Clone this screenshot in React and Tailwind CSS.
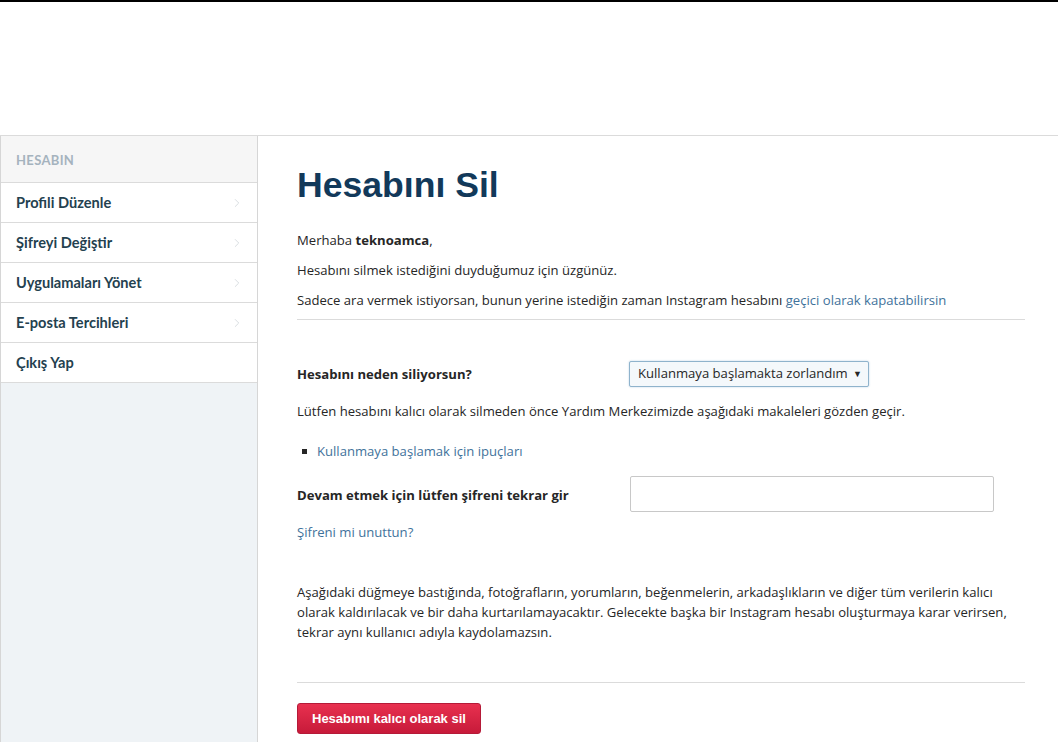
import { ChevronRight } from "lucide-react";

const menu = [
  { label: "Profili Düzenle", arrow: true },
  { label: "Şifreyi Değiştir", arrow: true },
  { label: "Uygulamaları Yönet", arrow: true },
  { label: "E-posta Tercihleri", arrow: true },
  { label: "Çıkış Yap", arrow: false },
];

function Sidebar() {
  return (
    <aside className="w-[258px] shrink-0 border-l border-r border-[#d6d6d6] bg-[#eff3f6] font-['Lato','Open_Sans',sans-serif]">
      <div className="h-[47px] flex items-center pt-[4px] px-[15px] bg-[#f6f6f6] border-b border-[#dbdbdb] text-[13px] font-bold tracking-wide text-[#a5b3be]">
        HESABIN
      </div>
      {menu.map((item) => (
        <div
          key={item.label}
          className="h-[40px] flex items-center justify-between pl-[15px] pr-[13px] bg-white border-b border-[#dbdbdb] text-[14.6px] font-bold text-[#24414f]"
        >
          <span>{item.label}</span>
          {item.arrow && <ChevronRight size={14} strokeWidth={1.5} className="text-[#d4d9dd]" />}
        </div>
      ))}
    </aside>
  );
}

export default function App() {
  return (
    <div className="min-h-[742px] bg-white border-t-2 border-black font-['Open_Sans','Noto_Sans',sans-serif] text-[13.1px] text-[#262626]">
      <div className="h-[133px]" />
      <div className="flex border-t border-[#dbdbdb] min-h-[607px]">
        <Sidebar />
        <main className="flex-1 pl-[39px] pr-[33px] pt-[26px] pb-[8px]">
          <h1 className="font-['Liberation_Sans',Arial,sans-serif] font-bold text-[35.6px] leading-[46px] text-[#12395a]">
            Hesabını Sil
          </h1>
          <div className="mt-[22px] flex flex-col gap-[10px] leading-[20px]">
            <p>
              Merhaba <span className="font-bold">teknoamca</span>,
            </p>
            <p>Hesabını silmek istediğini duyduğumuz için üzgünüz.</p>
            <p>
              Sadece ara vermek istiyorsan, bunun yerine istediğin zaman Instagram hesabını{" "}
              <a className="text-[#3f729b]">geçici olarak kapatabilirsin</a>
            </p>
          </div>
          <hr className="mt-[9px] border-[#dbdbdb]" />

          <div className="mt-[41px] flex items-center">
            <label className="w-[332px] font-bold pt-[2px]">Hesabını neden siliyorsun?</label>
            <div className="h-[26px] w-[240px] flex items-center justify-between pl-[8px] pr-[6px] border border-[#8fb3cc] rounded-[2px] bg-[#f4f8fb] shadow-[0_0_2px_rgba(80,140,190,0.4)]">
              <span>Kullanmaya başlamakta zorlandım</span>
              <span className="text-[9px]">▼</span>
            </div>
          </div>
          <p className="mt-[14px] leading-[20px]">
            Lütfen hesabını kalıcı olarak silmeden önce Yardım Merkezimizde aşağıdaki makaleleri gözden geçir.
          </p>
          <ul className="mt-[20px] pl-[5px] leading-[20px]">
            <li className="flex items-center gap-[10px]">
              <span className="w-[5px] h-[5px] bg-[#262626]" />
              <a className="text-[#3f729b]">Kullanmaya başlamak için ipuçları</a>
            </li>
          </ul>
          <div className="mt-[15px] flex items-center">
            <label className="w-[333px] font-bold pt-[4px]">Devam etmek için lütfen şifreni tekrar gir</label>
            <input
              type="password"
              className="h-[36px] w-[364px] border border-[#c8c8c8] rounded-[2px] bg-white outline-none px-2"
            />
          </div>
          <a className="block mt-[10px] leading-[20px] text-[#3f729b]">Şifreni mi unuttun?</a>

          <p className="mt-[40px] leading-[20px] max-w-[720px]">
            Aşağıdaki düğmeye bastığında, fotoğrafların, yorumların, beğenmelerin, arkadaşlıkların ve diğer tüm verilerin kalıcı olarak kaldırılacak ve bir daha kurtarılamayacaktır. Gelecekte başka bir Instagram hesabı oluşturmaya karar verirsen, tekrar aynı kullanıcı adıyla kaydolamazsın.
          </p>
          <hr className="mt-[40px] border-[#dbdbdb]" />
          <button className="mt-[20px] h-[31px] px-[14px] rounded-[3px] border border-[#b51a38] bg-gradient-to-b from-[#e8304f] to-[#c71a3a] text-white font-bold text-[13px] font-['Liberation_Sans',Arial,sans-serif]">
            Hesabımı kalıcı olarak sil
          </button>
        </main>
      </div>
    </div>
  );
}
